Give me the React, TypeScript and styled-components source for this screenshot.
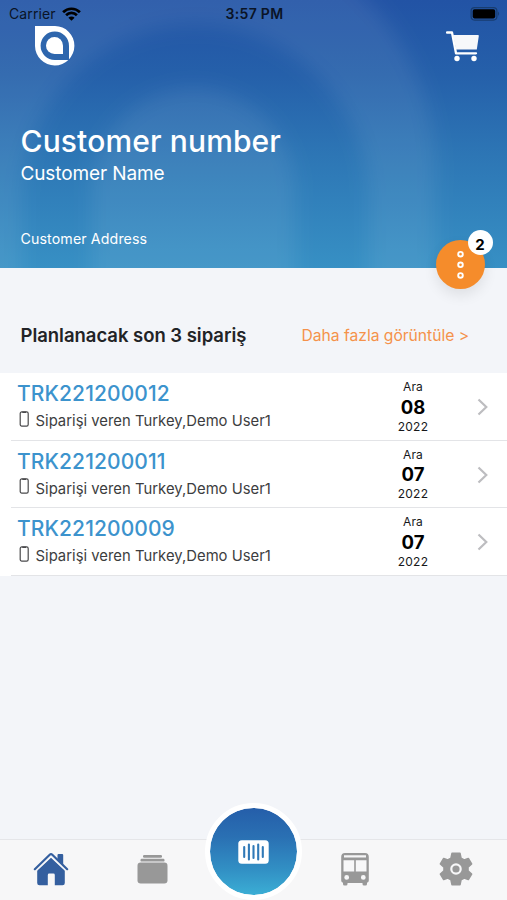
import React from "react";
import styled, { createGlobalStyle } from "styled-components";

const Global = createGlobalStyle`
  * { box-sizing: border-box; }
  body { margin: 0; background: #f3f5f9; font-family: Inter, "Liberation Sans", sans-serif; }
`;

const Screen = styled.main`
  width: 507px;
  height: 900px;
  display: flex;
  flex-direction: column;
  overflow: hidden;
  background: #f3f5f9;
`;

const Header = styled.header`
  position: relative;
  height: 268px;
  flex: none;
  display: flex;
  flex-direction: column;
  color: #fff;
  background: linear-gradient(180deg, #2253a5 0%, #2560aa 28%, #2d76b5 58%, #3790c4 100%);
`;

const Watermark = styled.svg`
  position: absolute;
  inset: 0;
  width: 507px;
  height: 268px;
`;

const StatusBar = styled.div`
  position: relative;
  display: grid;
  grid-template-columns: 1fr auto 1fr;
  align-items: center;
  height: 26px;
  padding: 1px 7px 0 9px;
  color: #0a1426;
  font-size: 14px;
  line-height: 26px;
`;

const Carrier = styled.div`
  display: flex;
  align-items: center;
  gap: 6px;
  letter-spacing: 0.1px;
`;

const Clock = styled.div`
  font-weight: 600;
  letter-spacing: 0.3px;
`;

const Battery = styled.svg`
  justify-self: end;
`;

const TopIcons = styled.div`
  position: relative;
  display: flex;
  justify-content: space-between;
  align-items: flex-start;
  height: 96px;
  padding: 0 27px 0 35px;
`;

const CartIcon = styled.svg`
  margin-top: 4px;
`;

const Customer = styled.div`
  position: relative;
  display: flex;
  flex-direction: column;
  padding-left: 20.5px;
  white-space: nowrap;
`;

const CustomerNumber = styled.h1`
  margin: 0;
  font-size: 30px;
  line-height: 38px;
  font-weight: 500;
  letter-spacing: 0.13px;
`;

const CustomerName = styled.div`
  margin-top: 1px;
  font-size: 19px;
  line-height: 26px;
  letter-spacing: -0.12px;
`;

const Address = styled.div`
  margin-top: 42px;
  font-size: 14.2px;
  line-height: 20px;
  letter-spacing: 0.12px;
`;

const MoreButton = styled.button`
  position: absolute;
  left: 436px;
  top: 240px;
  width: 49px;
  height: 49px;
  padding: 0;
  border: 0;
  border-radius: 50%;
  background: #f58c2b;
  box-shadow: 0 6px 14px rgba(0, 0, 0, 0.09);
`;

const Count = styled.span`
  position: absolute;
  left: 31.5px;
  top: -10px;
  width: 25px;
  height: 25px;
  border-radius: 50%;
  background: #fff;
  color: #000;
  font: 700 15px/29px Inter, sans-serif;
  text-align: center;
`;

const SectionHead = styled.div`
  flex: none;
  display: flex;
  justify-content: space-between;
  align-items: center;
  height: 105px;
  padding: 29px 38px 0 20.5px;
  white-space: nowrap;
`;

const SectionTitle = styled.h2`
  margin: 0;
  color: #222326;
  font-size: 18.5px;
  font-weight: 600;
  letter-spacing: -0.03px;
`;

const MoreLink = styled.a`
  color: #f5924a;
  font-size: 15.7px;
  letter-spacing: -0.04px;
`;

const Orders = styled.ul`
  margin: 0;
  padding: 0;
  list-style: none;
  background: #fff;
`;

const Order = styled.li`
  display: grid;
  grid-template-columns: 1fr 50px 69px;
  height: 67.6px;
  margin-left: 11px;
  padding-left: 6px;
  border-bottom: 1px solid #e3e4e7;
`;

const OrderText = styled.div`
  padding-top: 7px;
  white-space: nowrap;
`;

const OrderCode = styled.div`
  color: #3c93cd;
  font-size: 21px;
  line-height: 28px;
  font-weight: 500;
  letter-spacing: 0.1px;
`;

const OrderBy = styled.div`
  display: flex;
  align-items: center;
  gap: 5.5px;
  color: #3c3d40;
  font-size: 14.8px;
  line-height: 26px;
  letter-spacing: 0.03px;
`;

const PhoneIcon = styled.svg`
  margin: -5px 0 0 2px;
`;

const OrderDate = styled.time`
  display: flex;
  flex-direction: column;
  align-items: center;
  padding-top: 5px;
  color: #17181a;
  font-size: 12px;
  line-height: 18.6px;
  letter-spacing: 0.2px;
`;

const Day = styled.strong`
  color: #000;
  font-size: 18.5px;
  line-height: 21px;
  font-weight: 700;
  letter-spacing: 0;
`;

const Chevron = styled.svg`
  align-self: center;
  margin: 2px 0 0 39px;
`;

const TabBar = styled.nav`
  position: relative;
  flex: none;
  display: grid;
  grid-template-columns: repeat(5, 1fr);
  grid-template-rows: 58px;
  justify-items: center;
  align-items: center;
  height: 61px;
  margin-top: auto;
  border-top: 1px solid #e5e6e9;
  background: #f7f7f8;
`;

const Tab = styled.a<{ $active?: boolean }>`
  display: flex;
  color: ${(p) => (p.$active ? "#345f9f" : "#989898")};
`;

const ScanButton = styled.button`
  width: 97px;
  height: 97px;
  display: flex;
  align-items: center;
  justify-content: center;
  margin: -35px 0 0 1px;
  padding: 0;
  border: 5px solid #fff;
  border-radius: 50%;
  background: linear-gradient(#245ba8 0%, #2a70b3 35%, #3291c5 70%, #3db4d8 100%) border-box;
  background-clip: padding-box;
`;

const orders = [
  { code: "TRK221200012", day: "08" },
  { code: "TRK221200011", day: "07" },
  { code: "TRK221200009", day: "07" },
];

export default function App() {
  return (
    <>
      <Global />
      <Screen>
        <Header>
          <Watermark viewBox="0 0 507 268" aria-hidden="true">
            <defs>
              <filter id="soft" x="-20%" y="-20%" width="140%" height="140%">
                <feGaussianBlur stdDeviation="10" />
              </filter>
            </defs>
            <g fill="#fff" fillOpacity=".075" filter="url(#soft)">
              <path
                fillRule="evenodd"
                d="M-80-80H180A252 252 0 0 1 435 190V340H-80ZM195 25A173 173 0 0 0 22 198V340H368V198A173 173 0 0 0 195 25ZM195 88A103 103 0 0 0 92 191V340H295V191A103 103 0 0 0 195 88Z"
              />
            </g>
          </Watermark>
          <StatusBar>
            <Carrier>
              Carrier
              <svg width="19" height="14" viewBox="0 0 19 14" fill="none" stroke="#000" strokeWidth="2.7">
                <path d="M1.1 5.2a11.9 11.9 0 0 1 16.8 0M4.1 8.2a7.6 7.6 0 0 1 10.8 0" />
                <path d="M9.5 13.8 6.4 10.7a4.4 4.4 0 0 1 6.2 0Z" fill="#000" stroke="none" />
              </svg>
            </Carrier>
            <Clock>3:57 PM</Clock>
            <Battery width="30" height="14" viewBox="0 0 30 14">
              <rect x="1.1" y=".6" width="25.8" height="12.5" rx="3.5" fill="none" stroke="#183d70" strokeWidth="1.2" />
              <rect x="2.7" y="2.2" width="22.5" height="9.2" rx="1.8" fill="#000" />
              <path d="M28.1 4.6q2 2.2 0 4.4Z" fill="#183d70" />
            </Battery>
          </StatusBar>
          <TopIcons>
            <svg width="40" height="40" viewBox="0 0 40 40">
              <path d="M0 0H20A19.7 19.7 0 1 1 0 20Z" fill="#fff" />
              <path d="M34 34H20A14.2 14.2 0 1 1 34 20Z" fill="#2e66ad" />
              <path d="M28 28H19.5A8.5 8.5 0 1 1 28 19.5Z" fill="#fff" />
            </svg>
            <CartIcon width="34" height="32" viewBox="0 0 34 32">
              <path d="M1 2.5H6L10 23.3H30" fill="none" stroke="#fff" strokeWidth="2.3" strokeLinecap="round" strokeLinejoin="round" />
              <path d="M7 5H32Q33 5 32.8 6L30.8 19.5H10Z" fill="#f7f8fa" />
              <circle cx="11" cy="28.5" r="2.7" fill="#fff" />
              <circle cx="28" cy="28.5" r="2.7" fill="#fff" />
            </CartIcon>
          </TopIcons>
          <Customer>
            <CustomerNumber>Customer number</CustomerNumber>
            <CustomerName>Customer Name</CustomerName>
            <Address>Customer Address</Address>
          </Customer>
          <MoreButton aria-label="Menu">
            <svg width="49" height="49" viewBox="0 0 49 49" fill="none" stroke="#fff" strokeWidth="1.9">
              <circle cx="24.5" cy="14.2" r="2.3" />
              <circle cx="24.5" cy="24.8" r="2.3" />
              <circle cx="24.5" cy="35.4" r="2.3" />
            </svg>
            <Count>2</Count>
          </MoreButton>
        </Header>

        <SectionHead>
          <SectionTitle>Planlanacak son 3 sipariş</SectionTitle>
          <MoreLink>Daha fazla görüntüle &gt;</MoreLink>
        </SectionHead>

        <Orders>
          {orders.map((order) => (
            <Order key={order.code}>
              <OrderText>
                <OrderCode>{order.code}</OrderCode>
                <OrderBy>
                  <PhoneIcon width="11" height="16" viewBox="0 0 11 16" fill="none" stroke="#4a4a4c">
                    <rect x="1.2" y=".9" width="8" height="14.2" rx="1.6" strokeWidth="1.2" />
                    <path d="M3.3 1.3H7.1" strokeWidth="1.4" />
                  </PhoneIcon>
                  Siparişi veren Turkey,Demo User1
                </OrderBy>
              </OrderText>
              <OrderDate>
                Ara
                <Day>{order.day}</Day>
                2022
              </OrderDate>
              <Chevron width="12" height="18" viewBox="0 0 12 18" fill="none" stroke="#bdbdc0" strokeWidth="2.2">
                <path d="M1.5 1.5 9.3 9 1.5 16.5" />
              </Chevron>
            </Order>
          ))}
        </Orders>

        <TabBar>
          <Tab $active>
            <svg width="36" height="34" viewBox="0 0 36 34" fill="currentColor">
              <path d="M24.5 3Q24.5 2 25.5 2H29.2Q30.2 2 30.2 3V13L24.5 8Z" />
              <path d="M4.2 18 18 5.3 31.8 18V31Q31.8 33.3 29.5 33.3H21.8V23Q21.8 21.6 20.4 21.6H16.2Q14.8 21.6 14.8 23V33.3H6.5Q4.2 33.3 4.2 31Z" />
              <path d="M2.5 19.2 18 4.6 33.5 19.2" fill="none" stroke="#f7f7f8" strokeWidth="1.6" />
              <path d="M1.8 17.2 16.7 2.7Q18 1.5 19.3 2.7L34.2 17.2" fill="none" stroke="currentColor" strokeWidth="2.2" strokeLinecap="round" />
            </svg>
          </Tab>
          <Tab>
            <svg width="31" height="30" viewBox="0 0 31 30" fill="currentColor">
              <rect x="6" y="1" width="19" height="2.8" rx="1.2" />
              <rect x="3.5" y="4.8" width="24" height="2.8" rx="1.2" />
              <rect x=".5" y="8.6" width="30" height="20.8" rx="3.2" />
            </svg>
          </Tab>
          <ScanButton aria-label="Scan">
            <svg width="31" height="24" viewBox="0 0 31 24">
              <rect x=".3" y=".3" width="30.4" height="23.4" rx="3.5" fill="#fff" />
              <path d="M6.2 7V17M10.9 4.5V19.5M15.5 6V18M20.2 4.5V19.5M24.8 7V17" stroke="#3079b7" strokeWidth="2.1" strokeLinecap="round" />
            </svg>
          </ScanButton>
          <Tab>
            <svg width="28" height="34" viewBox="0 0 28 34" fill="currentColor">
              <path
                fillRule="evenodd"
                d="M4 1H24Q27.8 1 27.8 5V28.5Q27.8 30.5 26 30.8V32Q26 33.5 24.5 33.5H23Q21.5 33.5 21.5 32V31H6.5V32Q6.5 33.5 5 33.5H3.5Q2 33.5 2 32V30.8Q.2 30.5 .2 28.5V5Q.2 1 4 1ZM3 3.2V5.4H25V3.2ZM2.5 8.2V19.4H13.2V8.2ZM14.8 8.2V19.4H25.5V8.2ZM5.7 23A2.4 2.4 0 1 0 5.7 27.8A2.4 2.4 0 1 0 5.7 23ZM22.3 23A2.4 2.4 0 1 0 22.3 27.8A2.4 2.4 0 1 0 22.3 23Z"
              />
            </svg>
          </Tab>
          <Tab>
            <svg width="34" height="34" viewBox="0 0 34 34" fill="currentColor">
              <path
                stroke="currentColor"
                strokeWidth="1.6"
                strokeLinejoin="round"
                d="M13 1.3H21L22 6.2 25.2 8 29.3 6.5 32.6 12 29 15.2V18.8L32.6 22 29.3 27.5 25.2 26 22 27.8 21 32.7H13L12 27.8 8.8 26 4.7 27.5 1.4 22 5 18.8V15.2L1.4 12 4.7 6.5 8.8 8 12 6.2Z"
              />
              <circle cx="17" cy="17" r="4.7" stroke="#f7f7f8" strokeWidth="2.2" />
            </svg>
          </Tab>
        </TabBar>
      </Screen>
    </>
  );
}
